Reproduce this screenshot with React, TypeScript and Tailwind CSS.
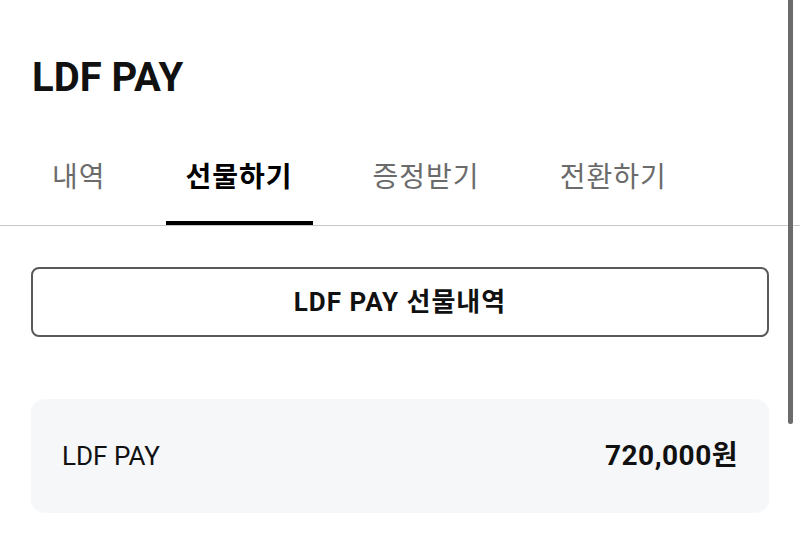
import { useState } from 'react'

const tabs = ['내역', '선물하기', '증정받기', '전환하기']

export default function App() {
  const [active, setActive] = useState(1)

  return (
    <div
      className="relative h-[555px] w-[800px] overflow-hidden bg-white text-[#111]"
      style={{ fontFamily: 'Roboto, "Noto Sans CJK KR", sans-serif' }}
    >
      {/* Header */}
      <div className="px-8 pt-[54px]">
        <h1 className="text-[40px] font-bold leading-[48px]">LDF PAY</h1>
      </div>

      {/* Tabs */}
      <div className="mt-[60px] flex gap-[40px] border-b border-[#c8c8c8] px-8">
        {tabs.map((tab, i) => (
          <button
            key={tab}
            onClick={() => setActive(i)}
            className={`px-5 pb-[27px] text-[28px] leading-[32px] tracking-[1px] ${
              active === i
                ? 'border-b-4 border-black font-bold text-black'
                : 'border-b-4 border-transparent text-[#6b6b6b]'
            }`}
          >
            {tab}
          </button>
        ))}
      </div>

      {/* Content */}
      <div className="px-[31px] pt-[41px]">
        <button className="flex h-[70px] w-full items-center justify-center rounded-lg border-2 border-[#595959] text-[26px] font-bold tracking-[1px]">
          LDF PAY 선물내역
        </button>

        <div className="mt-[62px] flex h-[114px] items-center justify-between rounded-[14px] bg-[#f5f7f9] px-[31px]">
          <span className="text-[26px]">LDF PAY</span>
          <span className="text-[28px] font-bold tracking-[0.5px]">720,000원</span>
        </div>
      </div>

      {/* Overlay scrollbar */}
      <div className="absolute right-[7px] top-0 h-[424px] w-[5px] rounded-b-full bg-[#6b6b6b]" />
    </div>
  )
}
